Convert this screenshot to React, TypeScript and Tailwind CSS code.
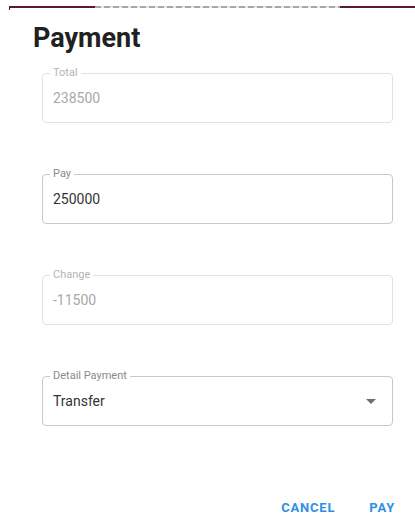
import React from "react";

type FieldProps = {
  label: string;
  value: string;
  disabled?: boolean;
  select?: boolean;
};

function OutlinedField({ label, value, disabled, select }: FieldProps) {
  return (
    <div
      className={
        "relative flex h-[50px] w-[351px] items-center rounded-[4px] border pl-[10px] pr-[14px] " +
        (disabled ? "border-[#e2e2e2]" : "border-[#c8c8c8]")
      }
    >
      <span
        className={
          "absolute -top-[7px] left-[7px] bg-white px-[3px] text-[11px] leading-[12px] " +
          (disabled ? "text-[#b4b4b4]" : "text-[#8a8a8a]")
        }
      >
        {label}
      </span>
      <span
        className={
          "flex-1 text-[14px] leading-[16px] " +
          (disabled ? "text-[#a8a8a8]" : "text-[#333333]")
        }
      >
        {value}
      </span>
      {select && (
        <svg width="10" height="5" viewBox="0 0 10 5" className="mr-[2px]">
          <path d="M0 0 L10 0 L5 5 Z" fill="#6f6f6f" />
        </svg>
      )}
    </div>
  );
}

export default function App() {
  return (
    <div
      className="h-[523px] w-[415px] overflow-hidden bg-white pt-[6px]"
      style={{ fontFamily: "Roboto, 'Liberation Sans', sans-serif" }}
    >
      {/* edge of the page header behind the dialog */}
      <div className="relative ml-[9px] flex h-[2px]">
        <div className="h-[2px] w-[86px] bg-[#5c1a2c]" />
        <div className="h-[2px] w-[245px] bg-[repeating-linear-gradient(90deg,#a7a7a7_0px,#a7a7a7_6px,#e6e6e6_6px,#e6e6e6_9px)]" />
        <div className="h-[2px] flex-1 bg-[#5c1a2c]" />
        <div className="absolute left-0 top-0 h-[4px] w-[1px] bg-[#5c1a2c]" />
      </div>

      <h2 className="ml-[33px] mt-[17px] text-[27px] font-bold leading-[26px] text-[#212121]">
        Payment
      </h2>

      <div className="ml-[42px] mt-[22px] flex flex-col gap-[51px]">
        <OutlinedField label="Total" value="238500" disabled />
        <OutlinedField label="Pay" value="250000" />
        <OutlinedField label="Change" value="-11500" disabled />
        <OutlinedField label="Detail Payment" value="Transfer" select />
      </div>

      <div className="mr-[20px] mt-[75px] flex justify-end gap-[34px]">
        <button className="text-[13px] font-bold leading-[13px] tracking-[0.8px] text-[#2f8fe6]">
          CANCEL
        </button>
        <button className="text-[13px] font-bold leading-[13px] tracking-[0.8px] text-[#2f8fe6]">
          PAY
        </button>
      </div>
    </div>
  );
}
